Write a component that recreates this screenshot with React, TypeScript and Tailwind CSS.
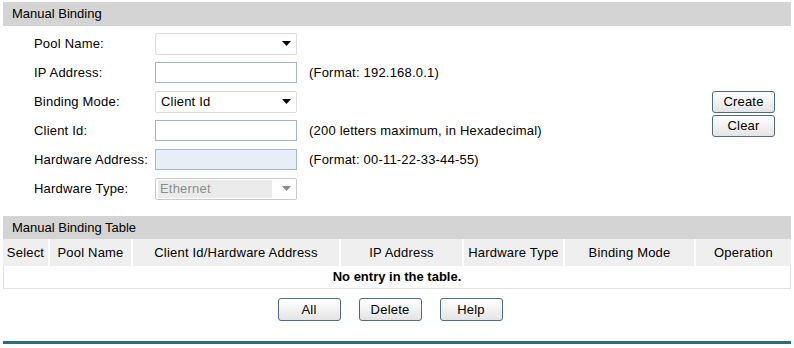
import React from "react";

const font = { fontFamily: '"Liberation Sans", Arial, sans-serif' };

function Arrow({ muted = false }: { muted?: boolean }) {
  return (
    <svg width="9" height="5" viewBox="0 0 9 5" className="shrink-0">
      <path d="M0 0h9L4.5 5z" fill={muted ? "#8a8a8a" : "#000"} />
    </svg>
  );
}

function Select({ value = "", disabled = false }: { value?: string; disabled?: boolean }) {
  return (
    <div
      className={`flex h-[22px] w-[142px] items-center justify-between rounded-[2px] border pl-[5px] pr-[5px] ${
        disabled ? "border-[#c9c9c9] bg-white text-[#8c8c8c]" : "border-[#dcdcdc] bg-white text-black"
      }`}
    >
      <span
        className={`flex h-[18px] items-center ${disabled ? "-ml-[3px] w-[114px] bg-[#ebebeb] pl-[2px]" : ""}`}
      >
        {value}
      </span>
      <Arrow muted={disabled} />
    </div>
  );
}

function Input({ disabled = false }: { disabled?: boolean }) {
  return (
    <div
      className={`h-[21px] w-[142px] border ${
        disabled ? "border-[#a9b8cc] bg-[#e8eef7]" : "border-[#a5b4c9] bg-white"
      }`}
    />
  );
}

function Btn({ label, tall = false }: { label: string; tall?: boolean }) {
  return (
    <button
      className={`flex ${tall ? "h-[23px]" : "h-[22px]"} w-[63px] items-center justify-center rounded-[3px] border border-[#4d6b8a] bg-gradient-to-b from-white to-[#e4e4e4] text-black`}
    >
      {label}
    </button>
  );
}

const rows: { label: string; field: React.ReactNode; hint?: string }[] = [
  { label: "Pool Name:", field: <Select /> },
  { label: "IP Address:", field: <Input />, hint: "(Format: 192.168.0.1)" },
  { label: "Binding Mode:", field: <Select value="Client Id" /> },
  { label: "Client Id:", field: <Input />, hint: "(200 letters maximum, in Hexadecimal)" },
  { label: "Hardware Address:", field: <Input disabled />, hint: "(Format: 00-11-22-33-44-55)" },
  { label: "Hardware Type:", field: <Select value="Ethernet" disabled /> },
];

const cols = [
  { name: "Select", w: "w-[45px]" },
  { name: "Pool Name", w: "w-[83px]" },
  { name: "Client Id/Hardware Address", w: "w-[208px]" },
  { name: "IP Address", w: "w-[123px]" },
  { name: "Hardware Type", w: "w-[101px]" },
  { name: "Binding Mode", w: "w-[131px]" },
  { name: "Operation", w: "flex-1" },
];

export default function App() {
  return (
    <div
      className="h-[348px] w-[794px] bg-white px-[3px] pt-[2px] text-[13px] tracking-[0.2px] text-black"
      style={font}
    >
      <div className="flex h-[24px] w-[788px] items-center bg-[#d4d4d4] pl-[9px] tracking-normal">
        Manual Binding
      </div>

      <div className="flex w-[788px] pt-[3px]">
        <div className="flex flex-col">
          {rows.map((r) => (
            <div key={r.label} className="flex h-[29px] items-center">
              <span className="w-[152px] pl-[31px]">{r.label}</span>
              {r.field}
              {r.hint && <span className="ml-[12px]">{r.hint}</span>}
            </div>
          ))}
        </div>
        <div className="ml-auto mr-[16px] flex flex-col gap-[2px] pt-[62px]">
          <Btn label="Create" />
          <Btn label="Clear" />
        </div>
      </div>

      <div className="mt-[13px] w-[788px]">
        <div className="flex h-[23px] items-center bg-[#d4d4d4] pl-[9px] tracking-normal">
          Manual Binding Table
        </div>
        <div className="flex h-[27px] bg-[#efefef]">
          {cols.map((c, i) => (
            <div
              key={c.name}
              className={`${c.w} flex items-center justify-center ${i > 0 ? "border-l-2 border-white" : ""}`}
            >
              {c.name}
            </div>
          ))}
        </div>
        <div className="flex h-[23px] items-center justify-center border border-t-0 border-[#e2e2e2] font-bold tracking-normal">
          No entry in the table.
        </div>
      </div>

      <div className="mt-[9px] flex w-[788px] justify-center gap-[18px] pr-[14px]">
        <Btn label="All" tall />
        <Btn label="Delete" tall />
        <Btn label="Help" tall />
      </div>

      <div className="mt-[20px] h-[3px] w-[788px] bg-[#2c6f7c]" />
    </div>
  );
}
